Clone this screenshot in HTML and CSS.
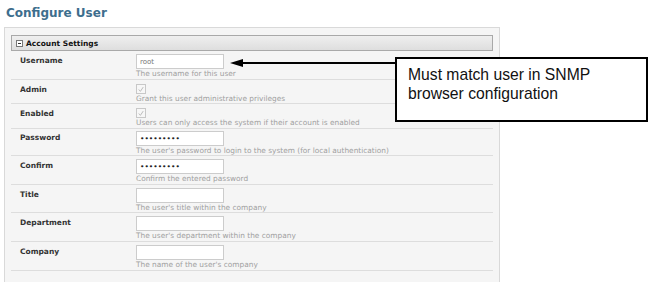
FILE: index.html
```html
<!DOCTYPE html>
<html lang="en">

<head>
    <meta charset="UTF-8">
    <title>Configure User</title>
    <link rel="stylesheet" href="styles.css">
</head>

<body>
    <h1 class="page-title">Configure User</h1>

    <div class="panel">
        <div class="section-bar">
            <span class="toggle-box"></span>
            Account Settings
        </div>

        <div class="form-row">
            <div class="field-label">Username</div>
            <div class="field-value">
                <input class="text-input" type="text" value="root">
                <div class="field-hint">The username for this user</div>
            </div>
        </div>
        <div class="form-row check-row short">
            <div class="field-label">Admin</div>
            <div class="field-value">
                <span class="check-box">
                    <svg width="9" height="9" viewBox="0 0 9 9"><path d="M2 4.5 L3.8 6.6 L7 1.8" fill="none" stroke="#b5b5b5" stroke-width="1"/></svg>
                </span>
                <div class="field-hint">Grant this user administrative privileges</div>
            </div>
        </div>
        <div class="form-row check-row">
            <div class="field-label">Enabled</div>
            <div class="field-value">
                <span class="check-box">
                    <svg width="9" height="9" viewBox="0 0 9 9"><path d="M2 4.5 L3.8 6.6 L7 1.8" fill="none" stroke="#b5b5b5" stroke-width="1"/></svg>
                </span>
                <div class="field-hint">Users can only access the system if their account is enabled</div>
            </div>
        </div>
        <div class="form-row pass-row">
            <div class="field-label">Password</div>
            <div class="field-value">
                <input class="text-input pass-input" type="password" value="123456789">
                <div class="field-hint">The user's password to login to the system (for local authentication)</div>
            </div>
        </div>
        <div class="form-row">
            <div class="field-label">Confirm</div>
            <div class="field-value">
                <input class="text-input pass-input" type="password" value="123456789">
                <div class="field-hint">Confirm the entered password</div>
            </div>
        </div>
        <div class="form-row title-row">
            <div class="field-label">Title</div>
            <div class="field-value">
                <input class="text-input" type="text">
                <div class="field-hint">The user's title within the company</div>
            </div>
        </div>
        <div class="form-row">
            <div class="field-label">Department</div>
            <div class="field-value">
                <input class="text-input" type="text">
                <div class="field-hint">The user's department within the company</div>
            </div>
        </div>
        <div class="form-row">
            <div class="field-label">Company</div>
            <div class="field-value">
                <input class="text-input" type="text">
                <div class="field-hint">The name of the user's company</div>
            </div>
        </div>
    </div>

    <!-- callout over the screenshot -->
    <svg class="callout-arrow" width="170" height="14" viewBox="0 0 170 14">
        <line x1="10" y1="7" x2="170" y2="7" stroke="#000" stroke-width="2"/>
        <polygon points="0,7 13,3 13,11" fill="#000"/>
    </svg>
    <div class="callout">Must match user in SNMP<br>browser configuration</div>
</body>

</html>
```

FILE: styles.css
```css
* {
    margin: 0;
    padding: 0;
    box-sizing: border-box;
}

body {
    background-color: white;
    font-family: "DejaVu Sans", Verdana, sans-serif;
    color: #333;
    position: relative;
    height: 282px;
    overflow: hidden;
}

.page-title {
    font-size: 12px;
    line-height: 16px;
    color: #3d6e8d;
    padding: 5px 6px 0;
    height: 27px;
}

.panel {
    margin-left: 4px;
    width: 496px;
    border: 1px solid #d9d9d9;
    border-bottom: none;
    background-color: #f5f5f5;
    padding: 7px 6px 0;
    height: 255px;
    overflow: hidden;
}

.section-bar {
    display: flex;
    align-items: center;
    gap: 3px;
    height: 16px;
    padding-left: 4px;
    border: 1px solid #a9a9a9;
    background: linear-gradient(#efefef, #dedede);
    font-size: 7.5px;
    font-weight: bold;
    color: #111;
}

.toggle-box {
    position: relative;
    width: 7px;
    height: 7px;
    border: 1px solid #777;
    background-color: white;
}

.toggle-box::after {
    content: "";
    position: absolute;
    left: 1px;
    top: 2px;
    width: 3px;
    height: 1px;
    background-color: #333;
}

.form-row {
    display: grid;
    grid-template-columns: 125px 1fr;
    border-bottom: 1px solid #dddddd;
    padding-top: 3px;
    height: 29px;
    overflow: hidden;
}

.check-row {
    height: 25px;
}

.check-row.short {
    height: 24px;
}

.pass-row {
    height: 27px;
    padding-top: 2px;
}

.title-row {
    height: 28px;
}

.field-label {
    font-size: 7.5px;
    font-weight: bold;
    color: #333;
    padding: 2px 0 0 9px;
}

.field-value {
    display: flex;
    flex-direction: column;
    align-items: flex-start;
}

.text-input {
    width: 88px;
    height: 15px;
    flex-shrink: 0;
    border: 1px solid #cccccc;
    background-color: white;
    font-family: "DejaVu Sans", Verdana, sans-serif;
    font-size: 7px;
    color: #777;
    padding: 0 3px;
    outline: none;
}

.pass-input {
    color: #222;
    font-size: 7.5px;
}

.check-box {
    display: flex;
    align-items: center;
    justify-content: center;
    flex-shrink: 0;
    width: 10px;
    height: 10px;
    border: 1px solid #c8c8c8;
    background-color: #f7f7f7;
    margin-top: 1px;
}

.field-hint {
    font-size: 7.4px;
    line-height: 10px;
    color: #a0a0a0;
    white-space: nowrap;
}

.callout-arrow {
    position: absolute;
    left: 230px;
    top: 56px;
}

.callout {
    position: absolute;
    left: 395px;
    top: 57px;
    width: 253px;
    height: 65px;
    border: 2px solid #000;
    background-color: white;
    font-family: "Liberation Sans", Arial, sans-serif;
    font-size: 15.7px;
    line-height: 19px;
    color: #111;
    padding: 6px 11px;
}
```
